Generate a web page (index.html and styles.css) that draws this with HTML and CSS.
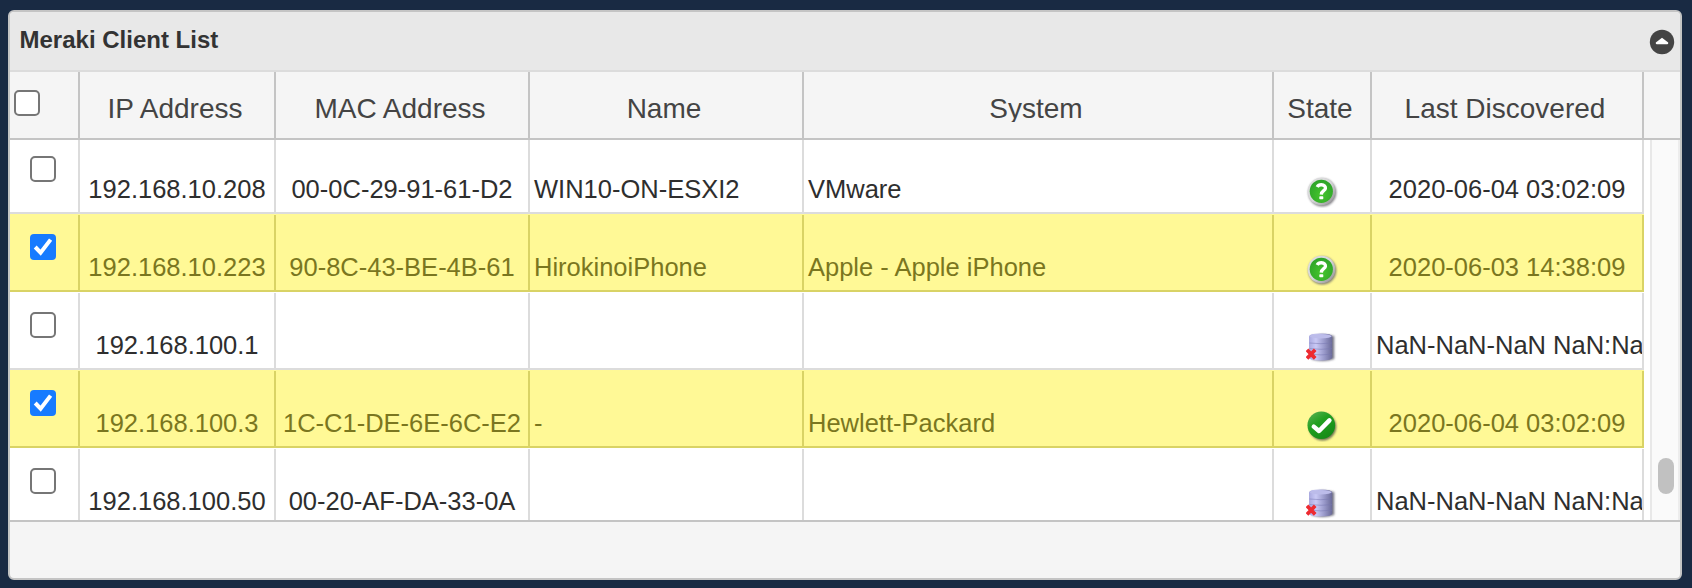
FILE: index.html
```html
<!DOCTYPE html>
<html lang="en">
<head>
<meta charset="utf-8">
<title>Meraki Client List</title>
<link rel="stylesheet" href="styles.css">
</head>
<body>
<svg class="defs" width="0" height="0" aria-hidden="true">
  <defs>
    <linearGradient id="silver" x1="0" y1="0" x2="1" y2="1"><stop offset="0" stop-color="#dedede"/><stop offset=".5" stop-color="#d8d8da"/><stop offset="1" stop-color="#8a888c"/></linearGradient>
    <radialGradient id="green" cx=".5" cy=".65" r=".6"><stop offset="0" stop-color="#45c52c"/><stop offset="1" stop-color="#2fa52a"/></radialGradient>
    <linearGradient id="leaf" x1="0" y1="0" x2=".7" y2="1"><stop offset="0" stop-color="#62b35b"/><stop offset=".45" stop-color="#22a020"/><stop offset="1" stop-color="#158a16"/></linearGradient>
    <linearGradient id="drum" x1="0" x2="1"><stop offset="0" stop-color="#a9a9df"/><stop offset=".3" stop-color="#c9c9f5"/><stop offset=".65" stop-color="#9a9acb"/><stop offset="1" stop-color="#6a6a98"/></linearGradient>
    <filter id="soft" x="-20%" y="-20%" width="150%" height="150%"><feGaussianBlur stdDeviation="1"/></filter>
    <symbol id="unknown" viewBox="0 0 32 32">
      <circle cx="16.3" cy="16.6" r="14" fill="#66646a" opacity=".8" filter="url(#soft)"/>
      <circle cx="15.5" cy="15.5" r="13.8" fill="url(#silver)"/>
      <circle cx="15.3" cy="15.3" r="11.6" fill="url(#green)"/>
      <path d="M11.2 11Q12.4 8.8 15.4 8.8C18.3 8.8 19.6 10.4 19.4 12.4C19.2 14.8 15.4 14.8 15.3 18.6" fill="none" stroke="#fff" stroke-width="3.4"/>
      <rect x="13.3" y="20.2" width="4" height="3" rx=".7" fill="#fff"/>
    </symbol>
    <symbol id="ok" viewBox="0 0 32 32">
      <circle cx="16.6" cy="16.8" r="13.6" fill="#3d443c" opacity=".75" filter="url(#soft)"/>
      <circle cx="15.3" cy="15.3" r="13.8" fill="url(#leaf)"/>
      <path d="M7.8 16.6L13 21L23.4 10.4" fill="none" stroke="#fff" stroke-width="4.5" stroke-linecap="round" stroke-linejoin="round"/>
    </symbol>
    <symbol id="database" viewBox="0 0 32 32">
      <path d="M5 4Q17 1 28.2 4V27Q18 30.5 6 27.5Z" fill="#555568" opacity=".8" filter="url(#soft)"/>
      <path d="M3 4.5Q3 1.6 14.5 1.6T26.2 4.5V25.5Q26.2 28.5 14.5 28.5T3 25.5Z" fill="url(#drum)"/>
      <ellipse cx="14.7" cy="4.3" rx="11" ry="2.2" fill="#bcbcea"/>
      <path d="M3.5 11Q15 12.4 26 11M3.5 16.6Q15 18 26 16.6M3.5 22.2Q15 23.6 26 22.2" fill="none" stroke="#7777b1" stroke-width="1" opacity=".5"/>
      <path d="M1 17.8L9.2 26.4M9.2 17.8L1 26.4" fill="none" stroke="#ee2a30" stroke-width="3.7"/>
    </symbol>
    <symbol id="tick" viewBox="0 0 26 26"><path d="M5.2 13L10.6 18.6L20.6 5.6" fill="none" stroke="#fff" stroke-width="4"/></symbol>
  </defs>
</svg>
<main class="panel">
  <header class="titlebar">
    <h1 class="title">Meraki Client List</h1>
    <svg class="collapse" viewBox="0 0 24 24"><circle cx="12" cy="12" r="12.2" fill="#444"/><path d="M5.8 13.5V12.5L12 7.8L18.2 12.5V13.5Q18 14.3 17.2 14.3H6.8Q6 14.3 5.8 13.5Z" fill="#fff"/></svg>
  </header>
  <div class="row head">
    <div class="cell check"><span class="box"></span></div>
    <div class="cell"><span class="label">IP Address</span></div>
    <div class="cell"><span class="label">MAC Address</span></div>
    <div class="cell"><span class="label">Name</span></div>
    <div class="cell"><span class="label">System</span></div>
    <div class="cell"><span class="label">State</span></div>
    <div class="cell"><span class="label">Last Discovered</span></div>
  </div>
  <div class="viewport">
    <div class="rows">
      <div class="row">
        <div class="cell check"><span class="box"></span></div>
        <div class="cell">192.168.10.208</div><div class="cell">00-0C-29-91-61-D2</div>
        <div class="cell left">WIN10-ON-ESXI2</div><div class="cell left">VMware</div>
        <div class="cell state"><svg class="icon"><use href="#unknown"/></svg></div><div class="cell">2020-06-04 03:02:09</div>
      </div>
      <div class="row selected">
        <div class="cell check"><span class="box checked"><svg class="tick"><use href="#tick"/></svg></span></div>
        <div class="cell">192.168.10.223</div><div class="cell">90-8C-43-BE-4B-61</div>
        <div class="cell left">HirokinoiPhone</div><div class="cell left">Apple - Apple iPhone</div>
        <div class="cell state"><svg class="icon"><use href="#unknown"/></svg></div><div class="cell">2020-06-03 14:38:09</div>
      </div>
      <div class="row">
        <div class="cell check"><span class="box"></span></div>
        <div class="cell">192.168.100.1</div><div class="cell"></div>
        <div class="cell left"></div><div class="cell left"></div>
        <div class="cell state"><svg class="icon"><use href="#database"/></svg></div><div class="cell left">NaN-NaN-NaN NaN:Na</div>
      </div>
      <div class="row selected">
        <div class="cell check"><span class="box checked"><svg class="tick"><use href="#tick"/></svg></span></div>
        <div class="cell">192.168.100.3</div><div class="cell">1C-C1-DE-6E-6C-E2</div>
        <div class="cell left">-</div><div class="cell left">Hewlett-Packard</div>
        <div class="cell state"><svg class="icon"><use href="#ok"/></svg></div><div class="cell">2020-06-04 03:02:09</div>
      </div>
      <div class="row">
        <div class="cell check"><span class="box"></span></div>
        <div class="cell">192.168.100.50</div><div class="cell">00-20-AF-DA-33-0A</div>
        <div class="cell left"></div><div class="cell left"></div>
        <div class="cell state"><svg class="icon"><use href="#database"/></svg></div><div class="cell left">NaN-NaN-NaN NaN:Na</div>
      </div>
    </div>
    <div class="track"><div class="thumb"></div></div>
  </div>
  <footer class="footer"></footer>
</main>
</body>
</html>
```
FILE: styles.css
```css
* { box-sizing: border-box; }
body {
  margin: 0;
  padding: 10px 10px 8px 8px;
  height: 588px;
  overflow: hidden;
  background: #192a43;
  color: #2e2e2e;
  font-family: "Liberation Sans", Arial, sans-serif;
}
.defs { position: absolute; }
.panel {
  width: 1674px;
  height: 570px;
  display: flex;
  flex-direction: column;
  border: 2px solid #c4c4c4;
  border-radius: 6px;
  background: #f5f5f5;
  overflow: hidden;
}
.titlebar {
  height: 60px;
  flex: none;
  display: flex;
  justify-content: space-between;
  padding: 14px 6px 0 9.5px;
  background: #e8e8e8;
  border-bottom: 2px solid #dcdcdc;
}
.title {
  margin: 0;
  font-size: 24px;
  line-height: 28px;
  color: #333;
}
.collapse { width: 24px; height: 24px; margin-top: 4px; overflow: visible; }
.row {
  display: grid;
  grid-template-columns: 70px 196px 254px 274px 470px 98px 272px;
  height: 78px;
  width: 1634px;
  border-bottom: 2px solid #dcdcdc;
  background: #fff;
  font-size: 25.5px;
  line-height: 30px;
}
.cell {
  min-width: 0;
  margin-top: 1px;
  padding-top: 37px;
  border-right: 2px solid #dcdcdc;
  text-align: center;
  white-space: nowrap;
  overflow: hidden;
}
.left { padding-left: 4px; text-align: left; }
.check { padding: 19px 0 0 20px; text-align: left; }
.box {
  display: block;
  width: 26px;
  height: 26px;
  border: 2px solid #767676;
  border-radius: 5px;
  background: #fff;
}
.checked { border: 0; border-radius: 4px; background: #177bff; }
.tick { display: block; width: 26px; height: 26px; }
.state { padding-top: 39px; }
.icon { display: block; width: 32px; height: 32px; margin: 0 auto; }
.selected {
  background: #fff996;
  border-color: #d9d365;
  color: #7a7620;
}
.selected .cell { border-color: #d9d365; }
.head {
  width: 100%;
  height: 68px;
  flex: none;
  background: #f5f5f5;
  border-color: #c4c4c4;
  color: #444;
  font-size: 28px;
}
.head .cell { margin: 0; padding: 20px 4px 0 0; border-color: #c4c4c4; }
.head .check { padding: 18px 0 0 4px; }
.label { display: block; height: 30px; overflow: hidden; line-height: 34px; }
.viewport {
  height: 380px;
  flex: none;
  display: flex;
  overflow: hidden;
  background: #fff;
}
.rows { width: 1640px; margin-top: -4px; flex: none; }
.track {
  width: 30px;
  padding: 318px 4px 0 6px;
  background: #fafafa;
  border-left: 2px solid #e8e8e8;
  border-right: 2px solid #ededed;
}
.thumb { width: 16px; height: 36px; border-radius: 8px; background: #c1c1c1; }
.footer { flex: 1; border-top: 2px solid #c4c4c4; }
```
